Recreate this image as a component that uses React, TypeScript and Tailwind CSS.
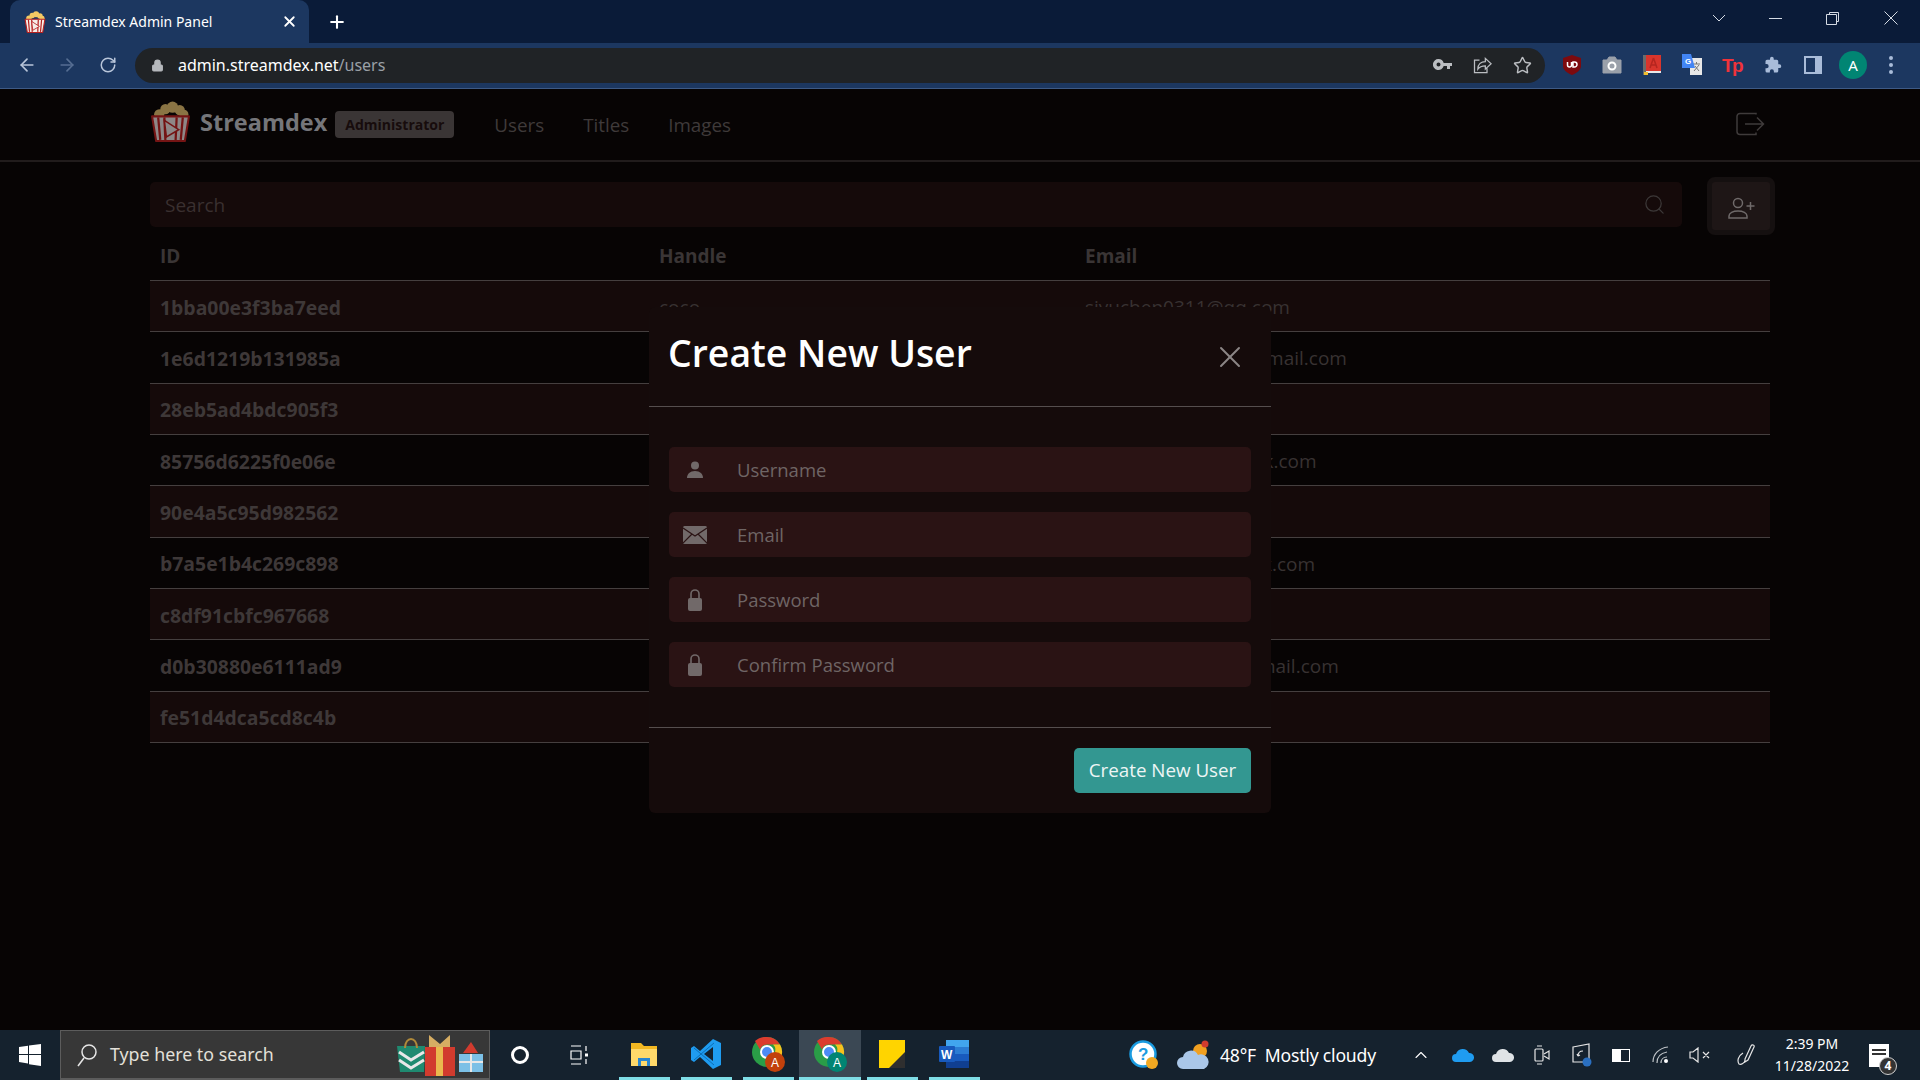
import { ArrowLeft, ArrowRight, ChevronUp, Lock, Plus, RotateCw, Search, Star, X } from "lucide-react";

const rows = [
  { id: "1bba00e3f3ba7eed", handle: "coco", email: "siyuchen0311@qq.com" },
  { id: "1e6d1219b131985a", handle: "", email: "marcus.streamex@gmail.com" },
  { id: "28eb5ad4bdc905f3", handle: "", email: "" },
  { id: "85756d6225f0e06e", handle: "", email: "dana.flixfan@outlook.com" },
  { id: "90e4a5c95d982562", handle: "", email: "" },
  { id: "b7a5e1b4c269c898", handle: "", email: "lee.watcher@outlook.com" },
  { id: "c8df91cbfc967668", handle: "", email: "" },
  { id: "d0b30880e6111ad9", handle: "", email: "rui.streamdex01@gmail.com" },
  { id: "fe51d4dca5cd8c4b", handle: "", email: "" },
];

function Popcorn({ size, top, red, white }: { size: number; top: string; red: string; white: string }) {
  return (
    <svg width={size} height={size} viewBox="0 0 40 40">
      <circle cx="9" cy="13" r="5" fill={top} />
      <circle cx="15" cy="8" r="5" fill={top} />
      <circle cx="22" cy="6" r="5.5" fill={top} />
      <circle cx="29" cy="9" r="5" fill={top} />
      <circle cx="33" cy="13" r="4.5" fill={top} />
      <path d="M2 15h36l-4 24H6z" fill={white} stroke={red} strokeWidth="2" strokeLinejoin="round" />
      <path d="M8 16l2 22M14 16l1 22M26 16l-1 22M32 16l-2 22" stroke={red} strokeWidth="2.2" />
      <path d="M14 19l14 9-12 7z" fill={white} stroke={red} strokeWidth="1.5" />
    </svg>
  );
}

function WindowControls() {
  return (
    <div className="flex items-center text-[#d5dbe4]">
      <svg width="14" height="8" viewBox="0 0 14 8" className="mr-[43px]" fill="none" stroke="currentColor">
        <path d="M1 1l6 6 6-6" />
      </svg>
      <div className="mr-[44px] h-px w-[13px] bg-current" />
      <svg width="13" height="13" viewBox="0 0 13 13" className="mr-[45px]" fill="none" stroke="currentColor">
        <path d="M3.5 2.5V.5h9v9h-2M.5 2.5h10v10H.5z" />
      </svg>
      <svg width="14" height="14" viewBox="0 0 14 14" className="mr-[22px]" stroke="currentColor">
        <path d="M.5.5l13 13M13.5.5l-13 13" />
      </svg>
    </div>
  );
}

function Extensions() {
  return (
    <div className="flex items-center">
      <svg width="20" height="22" viewBox="0 0 20 22" className="ml-[17px]">
        <path d="M10 1l9 3v8c0 4-4 7-9 9-5-2-9-5-9-9V4z" fill="#7d0a0e" />
        <path d="M5.500 8v3a2 2 0 004 0V8M11 8v5h1.500a2.500 2.500 0 000-5z" fill="none" stroke="#fff" strokeWidth="1.500" />
      </svg>
      <svg width="20" height="18" viewBox="0 0 20 18" className="ml-[20px]">
        <path d="M1 4h4l2-3h6l2 3h4v13H1z" fill="#9aa0aa" stroke="#9aa0aa" strokeLinejoin="round" />
        <circle cx="10" cy="10" r="3.500" fill="none" stroke="#fff" strokeWidth="2" />
      </svg>
      <svg width="18" height="20" viewBox="0 0 18 20" className="ml-[21px]">
        <rect x="0" y="0" width="18" height="18" fill="#d9352c" />
        <rect x="0" y="0" width="3" height="20" fill="#6b6b6b" />
        <rect x="3" y="16" width="15" height="2" fill="#e8e8e8" />
        <path d="M10.500 3l-3.500 10M10.500 3l3.500 10M8 10h5" stroke="#b5261f" strokeWidth="1.500" fill="none" />
        <rect x="1" y="17" width="4" height="3" fill="#f1bf2f" />
      </svg>
      <svg width="22" height="22" viewBox="0 0 22 22" className="ml-[20px]">
        <rect x="9" y="4" width="12" height="17" fill="#e8e8e8" />
        <path d="M12 10h7M15.500 8v2M13 17l5-6M14 12l4 5" stroke="#777" fill="none" />
        <path d="M1 0h9l4 14H1z" fill="#4285f4" />
        <text x="4" y="10" fontSize="8" fontWeight="700" fill="#fff" fontFamily="Liberation Sans, sans-serif">G</text>
      </svg>
      <span className="ml-[19px] w-[22px] font-['Liberation_Sans',sans-serif] text-[19px] leading-none font-bold tracking-[-1.5px] text-[#f0333a]">Tp</span>
      <svg width="18" height="18" viewBox="0 0 24 24" className="ml-[20px]" fill="#a9bcd9">
        <path d="M20.500 11H19V7a2 2 0 00-2-2h-4V3.500a2.500 2.500 0 00-5 0V5H4a2 2 0 00-2 2v3.800h1.500a2.700 2.700 0 010 5.400H2V20a2 2 0 002 2h3.800v-1.500a2.700 2.700 0 015.400 0V22H17a2 2 0 002-2v-4h1.500a2.500 2.500 0 000-5z" />
      </svg>
      <div className="ml-[22px] flex h-[18px] w-[18px] justify-end border-2 border-[#a9bcd9] bg-[#1c3760]">
        <div className="h-full w-[5px] bg-[#a9bcd9]" />
      </div>
      <div className="ml-[17px] flex h-[28px] w-[28px] items-center justify-center rounded-full bg-[#018573] text-[15px] text-white">A</div>
      <div className="ml-[22px] mr-[24px] flex flex-col gap-[3px]">
        <div className="h-[4px] w-[4px] rounded-full bg-[#a9bcd9]" />
        <div className="h-[4px] w-[4px] rounded-full bg-[#a9bcd9]" />
        <div className="h-[4px] w-[4px] rounded-full bg-[#a9bcd9]" />
      </div>
    </div>
  );
}

function BrowserChrome() {
  return (
    <div className="font-['Noto_Sans',sans-serif]">
      <div className="flex h-[43px] items-end justify-between bg-[#0a1b38]">
        <div className="flex items-center pl-[10px]">
          <div className="flex h-[43px] w-[299px] items-center rounded-t-[10px] bg-[#1c3760] pl-[14px] text-white">
            <Popcorn size={22} top="#f4ca64" red="#b5201f" white="#f6eee8" />
            <span className="ml-[9px] w-[226px] text-[14px]">Streamdex Admin Panel</span>
            <X size={17} strokeWidth={2.500} />
          </div>
          <Plus size={20} strokeWidth={2.500} className="ml-[18px] text-white" />
        </div>
        <div className="flex h-full items-center pb-[7px]">
          <WindowControls />
        </div>
      </div>
      <div className="flex h-[46px] items-center border-b border-[#3e5a85] bg-[#1c3760] pb-[1px]">
        <ArrowLeft size={20} className="ml-[17px] text-[#b9c6da]" />
        <ArrowRight size={20} className="ml-[20px] text-[#566e92]" />
        <RotateCw size={18} className="ml-[22px] text-[#b9c6da]" />
        <div className="ml-[18px] flex h-[35px] w-[1410px] items-center rounded-full bg-[#202326] pl-[16px]">
          <Lock size={13} fill="#b5b8bc" className="text-[#b5b8bc]" />
          <span className="ml-[14px] w-[1255px] text-[16px] tracking-[-0.01px] text-white">
            admin.streamdex.net<span className="text-[#9aa0a6]">/users</span>
          </span>
          <svg width="20" height="12" viewBox="0 0 20 12" fill="#bbbec2">
            <path d="M5.500 0a5.500 5.500 0 015.200 4H19v3h-2v3h-3V7h-3.300A5.500 5.500 0 115.500 0zm0 3.500a2 2 0 100 4 2 2 0 000-4z" />
          </svg>
          <svg width="20" height="20" viewBox="0 0 24 24" className="ml-[19px]" fill="none" stroke="#bbbec2" strokeWidth="1.500">
            <path d="M9 6H3v15h15v-5M7 17c0-6 4-9 9-9V4l7 6.500-7 6.500v-4c-4 0-7 1-9 4z" />
          </svg>
          <Star size={19} className="ml-[21px] text-[#bbbec2]" strokeWidth={1.800} />
        </div>
        <Extensions />
      </div>
    </div>
  );
}

function Navbar() {
  return (
    <div className="flex h-[73px] items-center border-b-2 border-[#211c1c] px-[150px]">
      <div className="mr-[9px] pb-[6px]">
        <Popcorn size={41} top="#8a7444" red="#741414" white="#8e8787" />
      </div>
      <span className="pb-[3px] text-[23.5px] font-bold text-[#75767a]">Streamdex</span>
      <span className="ml-[8px] flex h-[27px] w-[119px] items-center justify-center rounded-[4px] bg-[#3a3535] text-[14px] font-bold text-[#170c0c]">
        Administrator
      </span>
      <div className="ml-[40px] flex gap-[39px] pt-[1px] text-[18.8px] text-[#3f3a3a]">
        <span>Users</span>
        <span>Titles</span>
        <span>Images</span>
      </div>
      <svg width="30" height="24" viewBox="0 0 30 24" className="ml-auto mb-[2px] mr-[5px]" fill="none" stroke="#3f3b3b" strokeWidth="1.500">
        <path d="M21 2.500v-1H5a3 3 0 00-3 3v15a3 3 0 003 3h16v-2M10 12h18M22 5.500l6.500 6.500-6.500 6.500" />
      </svg>
    </div>
  );
}

function UserTable() {
  return (
    <div className="px-[150px] pt-[20px]">
      <div className="flex items-start justify-between">
        <div className="flex h-[45px] w-[1532px] items-center justify-between rounded-[5px] bg-[#150a0a] pl-[15px] pr-[16px] text-[19px] text-[#3a3030]">
          <span className="pt-[1px]">Search</span>
          <Search size={23} strokeWidth={1.300} className="text-[#3c3838]" />
        </div>
        <div className="-mr-[5px] -mt-[5px] flex h-[58px] w-[68px] items-center justify-center rounded-[8px] border-[5px] border-[#151010] bg-[#1e1616]">
          <svg width="28" height="22" viewBox="0 0 28 22" className="mt-[4px]" fill="none" stroke="#6f6a6a" strokeWidth="1.500">
            <circle cx="11" cy="6" r="4.500" />
            <path d="M2 21v-2c0-3 4-5 9-5s9 2 9 5v2zM19.500 9h8M23.500 5v8" />
          </svg>
        </div>
      </div>
      <div className="mt-[5px] grid h-[41px] grid-cols-[499px_426px_1fr] items-center border-b border-[#453f3f] px-[10px] pb-[7px] text-[19px] font-bold text-[#3a3535]">
        <span>ID</span>
        <span>Handle</span>
        <span>Email</span>
      </div>
      {rows.map((row, i) => (
        <div
          key={row.id}
          className={`grid h-[51.33px] grid-cols-[499px_426px_1fr] items-center border-b border-[#453f3f] px-[10px] pt-[2px] text-[19px] text-[#383232] ${i % 2 === 0 ? "bg-[#150a0a]" : ""}`}
        >
          <span className="text-[19.4px] font-bold text-[#3e3838]">{row.id}</span>
          <span>{row.handle}</span>
          <span>{row.email}</span>
        </div>
      ))}
    </div>
  );
}

function FieldIcon({ type }: { type: string }) {
  if (type === "user") {
    return (
      <svg width="18" height="18" viewBox="0 0 18 18" fill="#716969">
        <circle cx="9" cy="4.500" r="4" />
        <path d="M1 17c0-4 3-7 8-7s8 3 8 7z" />
      </svg>
    );
  }
  if (type === "mail") {
    return (
      <svg width="24" height="18" viewBox="0 0 24 18">
        <rect width="24" height="18" rx="1.500" fill="#716969" />
        <path d="M0 2l12 8 12-8M0 17l9-9M24 17l-9-9" fill="none" stroke="#2a1314" strokeWidth="1.200" />
      </svg>
    );
  }
  return (
    <svg width="16" height="23" viewBox="0 0 16 23" fill="#716969">
      <path d="M4 11V6a4 4 0 018 0v5" fill="none" stroke="#716969" strokeWidth="1.600" />
      <rect x="1" y="10" width="14" height="13" rx="2" />
    </svg>
  );
}

function CreateUserModal() {
  const fields = [
    { icon: "user", label: "Username" },
    { icon: "mail", label: "Email" },
    { icon: "lock", label: "Password" },
    { icon: "lock", label: "Confirm Password" },
  ];
  return (
    <div className="absolute left-[649px] top-[218px] w-[622px] rounded-[6px] bg-[#150b0b]">
      <div className="flex h-[100px] items-center justify-between border-b border-[#554e4e] pb-[7px] pl-[19px] pr-[23px]">
        <h1 className="text-[37.4px] font-semibold text-white">Create New User</h1>
        <X size={36} strokeWidth={1.300} className="mt-[7px] text-[#8b8686]" />
      </div>
      <div className="flex flex-col gap-[20px] border-b border-[#554e4e] px-[20px] py-[40px]">
        {fields.map((f) => (
          <div key={f.label} className="flex h-[45px] items-center rounded-[5px] bg-[#2a1314] text-[18.5px] text-[#6f6565]">
            <div className="flex w-[52px] justify-center">
              <FieldIcon type={f.icon} />
            </div>
            <span className="ml-[16px] pt-[1px]">{f.label}</span>
          </div>
        ))}
      </div>
      <div className="flex justify-end p-[20px]">
        <button className="h-[45px] w-[177px] rounded-[5px] bg-[#339791] text-[18.8px] text-[#edf5f5]">Create New User</button>
      </div>
    </div>
  );
}

function Taskbar() {
  return (
    <div className="flex h-[50px] items-center bg-[#15222e] font-['Noto_Sans',sans-serif] text-white">
      <div className="flex w-[60px] justify-center">
        <svg width="22" height="22" viewBox="0 0 22 22" fill="#fff">
          <path d="M0 3l9-1.300V10H0zM10 1.500L22 0v10H10zM0 11h9v8.500L0 18zM10 11h12v11l-12-1.700z" />
        </svg>
      </div>
      <div className="flex h-[50px] w-[430px] items-center border border-b-2 border-[#5c5c5c] bg-[#373737] pl-[16px]">
        <svg width="20" height="24" viewBox="0 0 20 24" fill="none" stroke="#e5e5e5" strokeWidth="1.500">
          <circle cx="12" cy="9" r="7" />
          <path d="M7 15l-6 8" />
        </svg>
        <span className="ml-[13px] w-[287px] text-[17.8px] text-[#e3e0d9]">Type here to search</span>
        <svg width="88" height="42" viewBox="0 0 88 42">
          <path d="M0 12h28l-1 26H3z" fill="#1f8a70" />
          <path d="M2 18l12 8 13-8M2 26l12 8 13-8" fill="none" stroke="#e8e8e8" strokeWidth="3" />
          <path d="M8 14C8 2 20 2 20 14" fill="none" stroke="#b08a3a" strokeWidth="2" />
          <path d="M32 1l11 9 10-9v12H32z" fill="#d6ad63" />
          <rect x="28" y="13" width="30" height="29" fill="#d13b2e" />
          <rect x="39" y="13" width="7" height="29" fill="#eab94e" />
          <rect x="62" y="20" width="24" height="18" fill="#7cc0e6" />
          <path d="M74 20v18M62 28h24" stroke="#e8e8e8" strokeWidth="2" />
          <path d="M66 19l8-11 7 11z" fill="#d13b2e" />
        </svg>
      </div>
      <div className="ml-[21px] h-[18px] w-[18px] rounded-full border-[3px] border-white" />
      <svg width="20" height="20" viewBox="0 0 20 20" className="ml-[41px]" fill="none" stroke="#fff" strokeWidth="1.200">
        <path d="M1 1h10M1 19h10M1 6h10v8H1zM16 1v5M16 14v5" />
        <rect x="15" y="8.500" width="3" height="3" fill="#fff" stroke="none" />
      </svg>
      <div className="ml-[23px] flex items-stretch">
        <TaskSlot>
          <svg width="28" height="28" viewBox="0 0 28 28">
            <path d="M1 3h10l3 3h13v20H1z" fill="#f2b822" />
            <path d="M1 9h26v17H1z" fill="#ffd96a" />
            <path d="M8 26v-8h12v8h-3v-5h-6v5z" fill="#2a86cf" />
          </svg>
        </TaskSlot>
        <TaskSlot>
          <svg width="32" height="32" viewBox="0 0 32 32">
            <path d="M23 1l8 4v22l-8 4-13-12-6 5-3-2v-12l3-2 6 5z" fill="#1f9cf0" />
            <path d="M23 9l-9 7 9 7z" fill="#15222e" />
            <path d="M4 10l20 17M4 22L24 5" stroke="#0a6fb8" strokeWidth="1" fill="none" />
          </svg>
        </TaskSlot>
        <TaskSlot>
          <ChromeIcon badge="#c2410c" />
        </TaskSlot>
        <TaskSlot active>
          <ChromeIcon badge="#018573" />
        </TaskSlot>
        <TaskSlot>
          <svg width="26" height="28" viewBox="0 0 26 28">
            <path d="M0 0h26v28H10L0 28z" fill="#ffd400" />
            <path d="M10 28l16-16v16z" fill="#2f2f2f" />
          </svg>
        </TaskSlot>
        <TaskSlot>
          <svg width="30" height="28" viewBox="0 0 30 28">
            <path d="M7 0h23v7H7z" fill="#41a5ee" />
            <path d="M7 7h23v7H7z" fill="#2b7cd3" />
            <path d="M7 14h23v7H7z" fill="#185abd" />
            <path d="M7 21h23v7H7z" fill="#103f91" />
            <rect x="0" y="6" width="16" height="16" rx="1" fill="#185abd" />
            <text x="2" y="19" fontSize="12" fontWeight="700" fill="#fff" fontFamily="Liberation Sans, sans-serif">W</text>
          </svg>
        </TaskSlot>
      </div>
      <Tray />
    </div>
  );
}

function TaskSlot({ children, active }: { children: React.ReactNode; active?: boolean }) {
  return (
    <div className={`flex h-[50px] w-[62px] flex-col items-center justify-between ${active ? "bg-[#3b4854]" : ""}`}>
      <div className="flex flex-1 items-center">{children}</div>
      <div className={`h-[3px] bg-[#7fdde6] ${active ? "w-full" : "w-[51px]"}`} />
    </div>
  );
}

function ChromeIcon({ badge }: { badge: string }) {
  return (
    <svg width="34" height="38" viewBox="0 0 34 38">
      <circle cx="16" cy="17" r="15" fill="#2a9d47" />
      <path d="M16 2a15 15 0 0113 7.500H16a7.500 7.500 0 00-7 5L4 6a15 15 0 0112-4z" fill="#dc3c2e" />
      <path d="M29 9.500A15 15 0 0116 32l7-13a7 7 0 00-1-9.500z" fill="#f7c11e" />
      <circle cx="16" cy="17" r="6" fill="#4c8bf5" stroke="#fff" strokeWidth="2" />
      <circle cx="24" cy="27" r="10" fill={badge} />
      <text x="20" y="32" fontSize="12" fill="#fff" fontFamily="Liberation Sans, sans-serif">A</text>
    </svg>
  );
}

function Tray() {
  return (
    <div className="ml-auto flex h-full items-center">
      <svg width="30" height="30" viewBox="0 0 30 30" className="mr-[18px]">
        <circle cx="14" cy="14" r="12.500" fill="#fff" stroke="#1a9be0" strokeWidth="2.500" />
        <text x="9" y="20" fontSize="17" fontWeight="700" fill="#1a9be0" fontFamily="Liberation Sans, sans-serif">?</text>
        <circle cx="23" cy="23" r="6" fill="#f2a922" />
      </svg>
      <svg width="34" height="30" viewBox="0 0 34 30" className="mr-[9px]">
        <circle cx="23" cy="11" r="7" fill="#f0a020" />
        <circle cx="28" cy="4" r="3.500" fill="#d13b2e" />
        <path d="M6 29a6 6 0 010-12 8 8 0 0115-2 7 7 0 016 14z" fill="#aac7e8" />
      </svg>
      <span className="w-[191px] text-[17.6px] tracking-[-0.2px] whitespace-nowrap">48°F&nbsp; Mostly cloudy</span>
      <ChevronUp size={20} strokeWidth={1.300} className="mr-[21px]" />
      <svg width="22" height="14" viewBox="0 0 22 14" className="mr-[18px]" fill="#1f9cf0">
        <path d="M4 14a4 4 0 010-8 7 7 0 0113-1 4.500 4.500 0 011 9z" />
      </svg>
      <svg width="22" height="14" viewBox="0 0 22 14" className="mr-[20px]" fill="#dfe3e6">
        <path d="M4 14a4 4 0 010-8 7 7 0 0113-1 4.500 4.500 0 011 9z" />
      </svg>
      <svg width="16" height="20" viewBox="0 0 16 20" className="mr-[22px]" fill="none" stroke="#e6e6e6" strokeWidth="1.200">
        <rect x="1" y="4" width="8" height="12" rx="1" />
        <path d="M10 9l5-3v8l-5-3M3 1h5M3 19h5" />
      </svg>
      <svg width="20" height="24" viewBox="0 0 20 24" className="mr-[20px]" fill="none" stroke="#e6e6e6" strokeWidth="1.200">
        <path d="M1 4l16-3v18H1zM6 13c0-3 2-5 5-5M6 13l-1-2M6 13l2-1" />
        <circle cx="15" cy="19" r="4.500" fill="#2a6fc0" stroke="none" />
      </svg>
      <div className="mr-[22px] flex h-[13px] w-[18px] border border-white">
        <div className="h-full w-[8px] bg-white" />
      </div>
      <svg width="18" height="18" viewBox="0 0 18 18" className="mr-[19px]" fill="none" stroke="#bfc4c8" strokeWidth="1.200">
        <path d="M1 16C1 8 7 2 16 1M5 17c0-6 4-10 10-11M9 17c0-3 2-6 6-6" />
        <circle cx="14" cy="15" r="2" fill="#fff" stroke="none" />
      </svg>
      <svg width="24" height="16" viewBox="0 0 24 16" className="mr-[24px]" fill="none" stroke="#e6e6e6" strokeWidth="1.200">
        <path d="M1 5h3l5-4v14l-5-4H1zM14 5l6 6M20 5l-6 6" />
      </svg>
      <svg width="20" height="22" viewBox="0 0 20 22" className="mr-[15px]" fill="none" stroke="#e6e6e6" strokeWidth="1.200">
        <path d="M8 15l6-13c1-2 4-1 3 1l-6 13-3 2zM6 9c-5 3-6 8-4 11 2 1 6-1 6-4" />
      </svg>
      <div className="mr-[17px] flex w-[80px] flex-col items-center text-[14px] leading-[22px]">
        <span>2:39 PM</span>
        <span>11/28/2022</span>
      </div>
      <div className="relative mr-[31px] h-[23px] w-[20px] bg-white">
        <div className="mx-[3px] mt-[5px] h-[2px] bg-[#333]" />
        <div className="mx-[3px] mt-[2px] h-[2px] bg-[#333]" />
        <div className="absolute -bottom-[8px] -right-[8px] flex h-[18px] w-[18px] items-center justify-center rounded-full border border-[#d0d0d0] bg-[#333] text-[12px] font-bold">4</div>
      </div>
    </div>
  );
}

export default function App() {
  return (
    <div className="flex h-screen w-full flex-col overflow-hidden bg-[#070404]">
      <BrowserChrome />
      <div className="relative flex-1 font-['Open_Sans',sans-serif]">
        <Navbar />
        <UserTable />
        <CreateUserModal />
      </div>
      <Taskbar />
    </div>
  );
}
